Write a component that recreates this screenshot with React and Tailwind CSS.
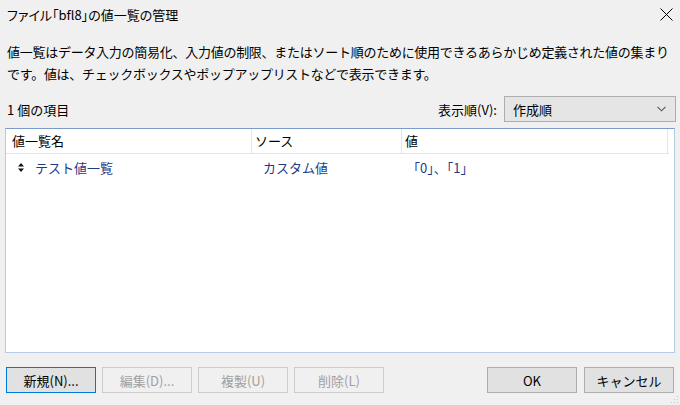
import React from "react";

const font = { fontFamily: '"Noto Sans CJK JP", "Noto Sans", sans-serif' };

function Btn({ children, focused, disabled, className = "" }) {
  let cls =
    "w-[90px] h-[26px] flex items-center justify-center text-[13px] border leading-none ";
  if (focused) cls += "border-[#0078d7] bg-[#e1e1e1] text-black";
  else if (disabled) cls += "border-[#cccccc] bg-[#f0f0f0] text-[#a0a0a0]";
  else cls += "border-[#adadad] bg-[#e1e1e1] text-black";
  return <div className={cls + " " + className}>{children}</div>;
}

export default function App() {
  return (
    <div
      className="relative w-[680px] h-[405px] bg-[#f0f0f0] flex flex-col text-black overflow-hidden"
      style={font}
    >
      {/* title bar */}
      <div className="h-[29px] flex items-center justify-between pl-[7px] pr-[7px]">
        <span className="text-[13px] [font-feature-settings:'palt'] leading-none">
          ファイル「bfl8」の値一覧の管理
        </span>
        <svg width="13" height="13" viewBox="0 0 13 13" className="mr-[0px]">
          <path d="M0.5 0.5 L12.5 12.5 M12.5 0.5 L0.5 12.5" stroke="#000" strokeWidth="1" fill="none" />
        </svg>
      </div>

      {/* description */}
      <div className="mt-[12px] pl-[7px] text-[13px] leading-[22px] tracking-[-0.27px]">
        値一覧はデータ入力の簡易化、入力値の制限、またはソート順のために使用できるあらかじめ定義された値の集まり
        <br />
        です。値は、チェックボックスやポップアップリストなどで表示できます。
      </div>

      {/* count + sort */}
      <div className="mt-[11px] h-[26px] flex items-center justify-between pl-[7px] pr-[4px]">
        <span className="text-[13px] leading-none">1 個の項目</span>
        <div className="flex items-center gap-[7px]">
          <span className="text-[13px] leading-none">表示順(V):</span>
          <div className="w-[172px] h-[26px] border border-[#adadad] bg-[#e5e5e5] flex items-center justify-between pl-[8px] pr-[9px]">
            <span className="text-[13px] leading-none">作成順</span>
            <svg width="9" height="6" viewBox="0 0 9 6">
              <path d="M0.5 0.8 L4.5 4.8 L8.5 0.8" stroke="#555" strokeWidth="1.1" fill="none" />
            </svg>
          </div>
        </div>
      </div>

      {/* list */}
      <div className="mt-[6px] mx-[5px] h-[225px] bg-white border border-[#b6cbe6] border-t-[#7a9ccc] flex flex-col">
        <div className="h-[25px] flex border-b border-[#e5e5e5] w-[663px] text-[13px]">
          <div className="w-[246px] border-r border-[#e5e5e5] pl-[6px] flex items-center">値一覧名</div>
          <div className="w-[150px] border-r border-[#e5e5e5] pl-[3px] flex items-center">ソース</div>
          <div className="w-[266px] border-r border-[#e5e5e5] pl-[3px] flex items-center">値</div>
        </div>
        <div className="mt-[3px] h-[21px] flex text-[13px] text-[#1f3a86]">
          <div className="w-[246px] flex items-center pl-[12px]">
            <svg width="6" height="9" viewBox="0 0 6 9" className="mr-[11px]">
              <path d="M0 3.6 L3 0 L6 3.6 Z M0 5.4 L3 9 L6 5.4 Z" fill="#111" />
            </svg>
            テスト値一覧
          </div>
          <div className="w-[150px] flex items-center pl-[11px]">カスタム値</div>
          <div className="w-[266px] flex items-center pl-[5px]">「0」、「1」</div>
        </div>
      </div>

      {/* buttons */}
      <div className="mt-[14px] flex items-center justify-between pl-[6px] pr-[6px]">
        <div className="flex gap-[6px]">
          <Btn focused>新規(N)...</Btn>
          <Btn disabled>編集(D)...</Btn>
          <Btn disabled>複製(U)</Btn>
          <Btn disabled>削除(L)</Btn>
        </div>
        <div className="flex gap-[7px]">
          <Btn>OK</Btn>
          <Btn>キャンセル</Btn>
        </div>
      </div>

      <svg width="8" height="8" viewBox="0 0 8 8" className="absolute right-[1px] bottom-[1px]">
        <rect x="6" y="0" width="1" height="1" fill="#c8c8c8" />
        <rect x="3" y="3" width="1" height="1" fill="#c8c8c8" />
        <rect x="6" y="3" width="1" height="1" fill="#c8c8c8" />
        <rect x="0" y="6" width="1" height="1" fill="#c8c8c8" />
        <rect x="3" y="6" width="1" height="1" fill="#c8c8c8" />
        <rect x="6" y="6" width="1" height="1" fill="#c8c8c8" />
      </svg>
    </div>
  );
}
